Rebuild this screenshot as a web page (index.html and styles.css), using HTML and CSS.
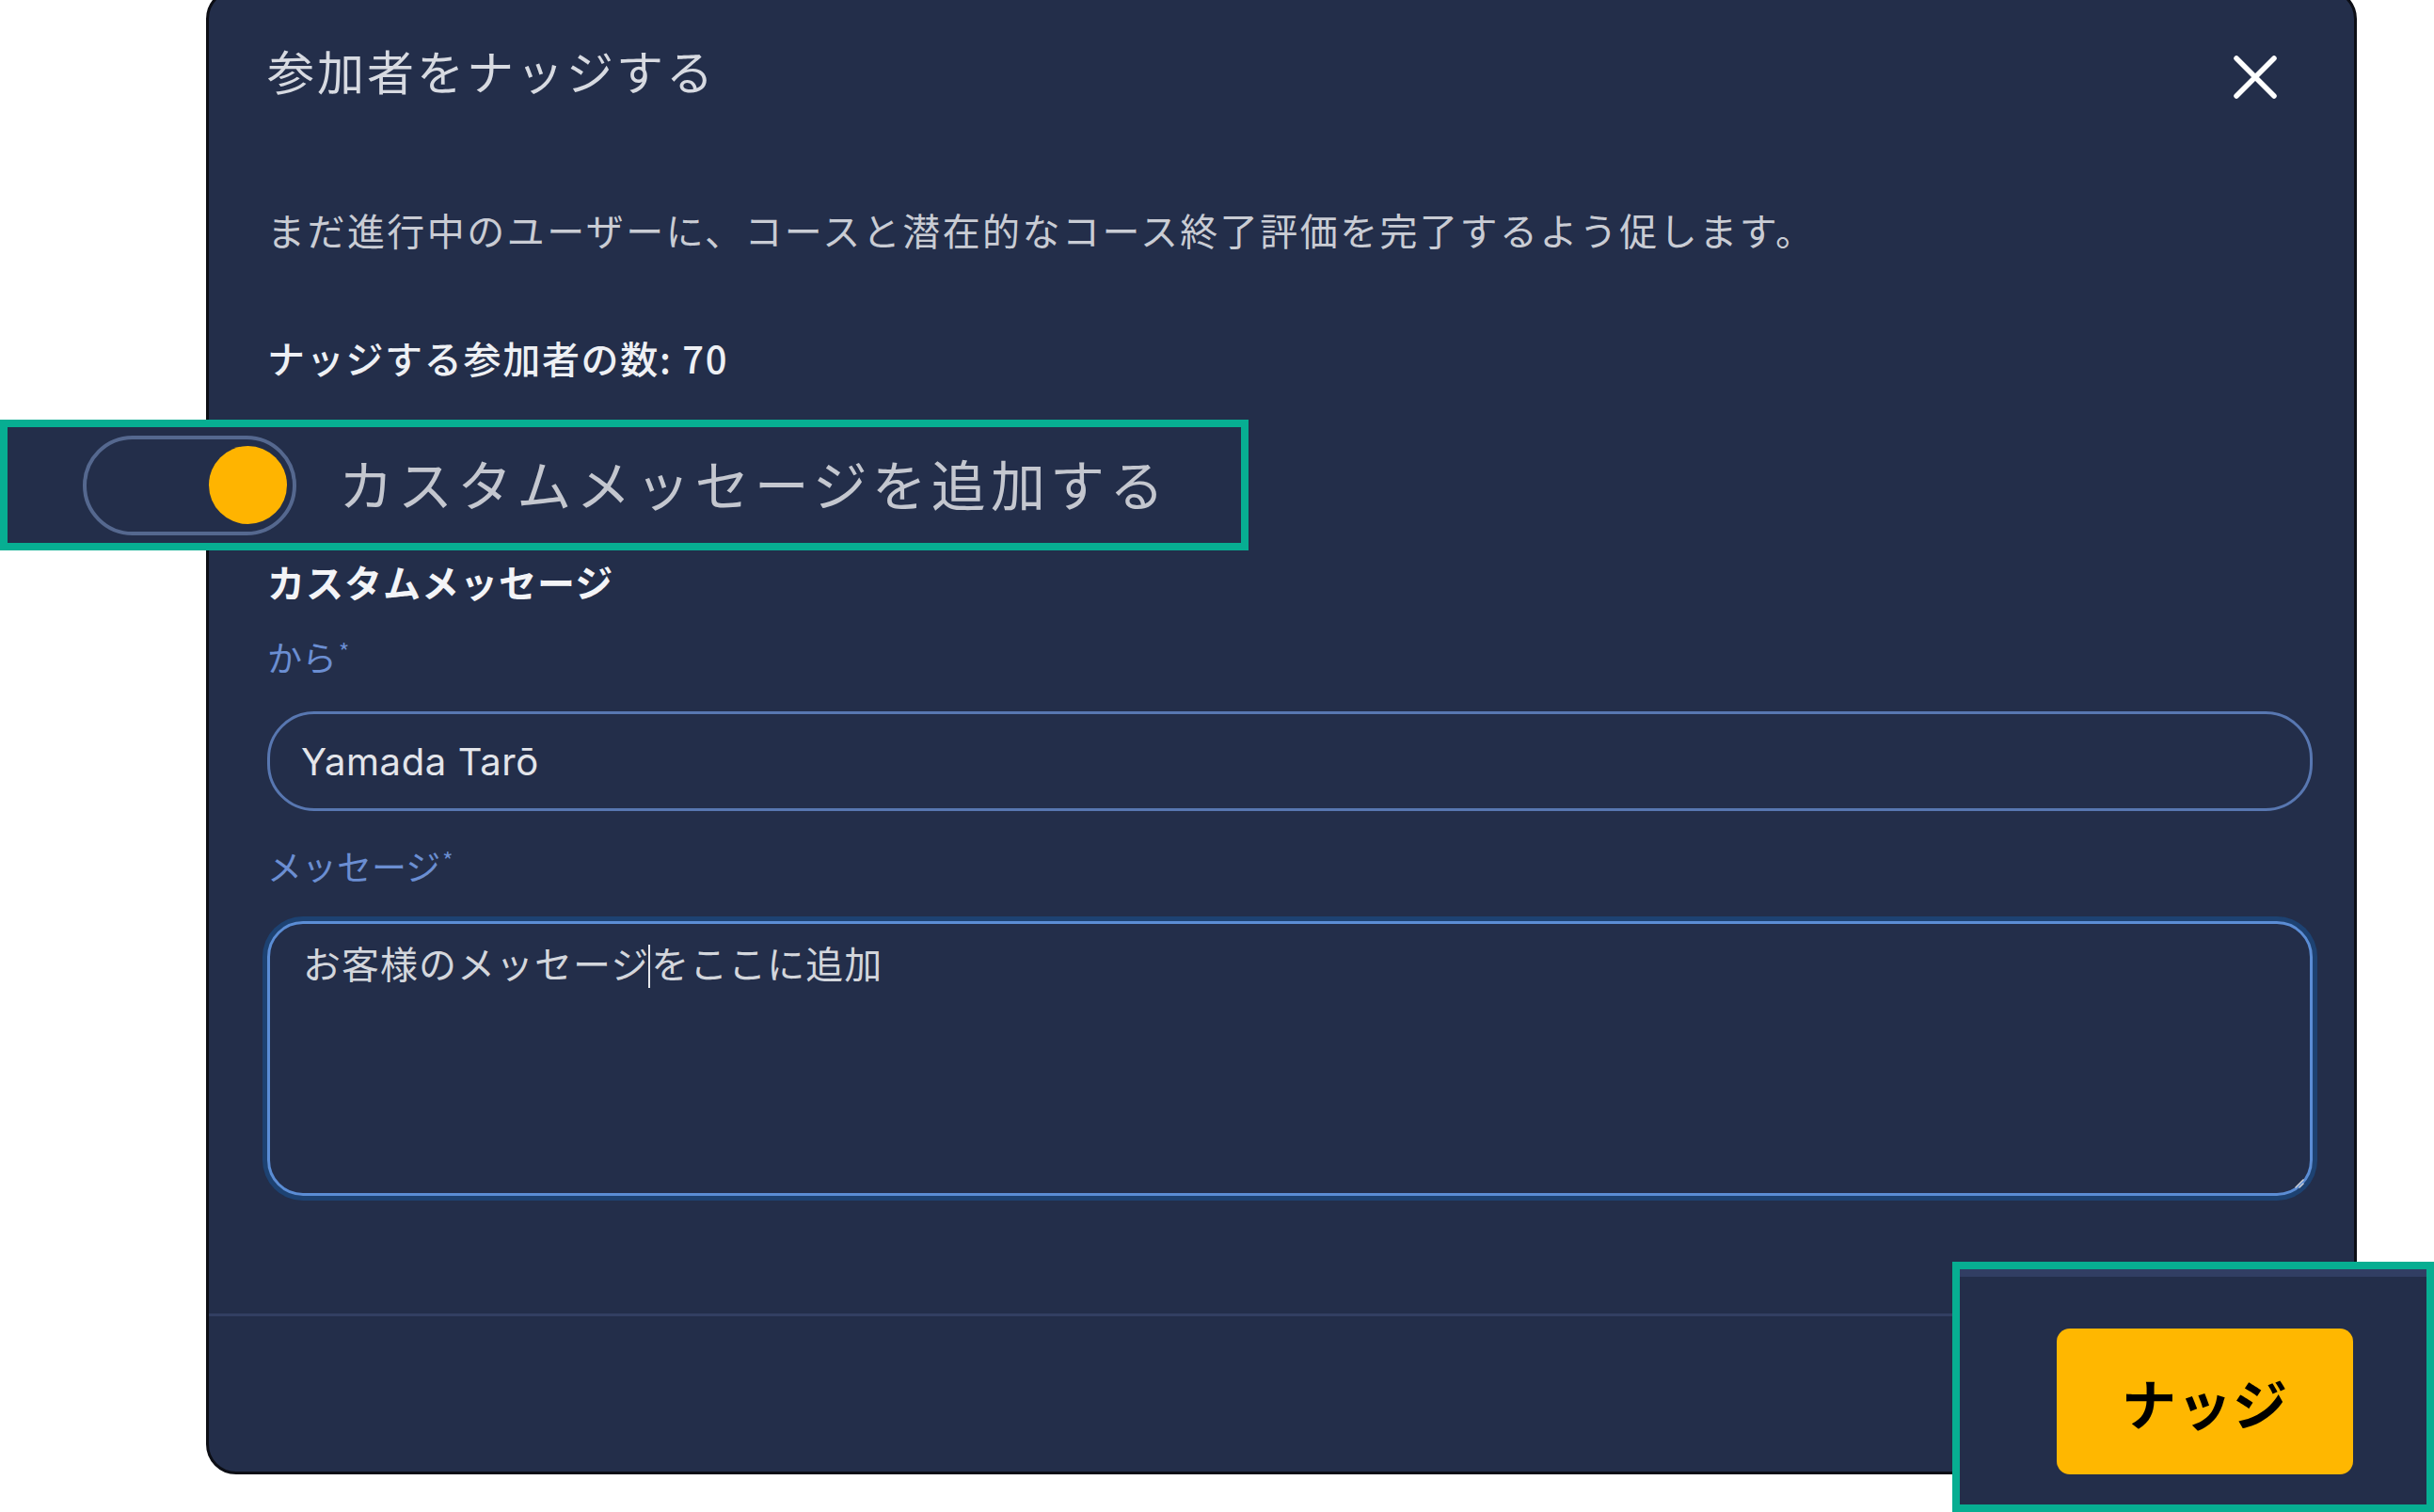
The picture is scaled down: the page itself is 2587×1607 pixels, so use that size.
FILE: index.html
```html
<!DOCTYPE html>
<html lang="ja">
<head>
<meta charset="utf-8">
<title>参加者をナッジする</title>
<link rel="stylesheet" href="styles.css">
</head>
<body>
<div class="modal">
  <div class="modal-header">
    <h1 class="title">参加者をナッジする</h1>
    <button class="close" aria-label="閉じる">
      <svg width="46" height="46" viewBox="0 0 46 46"><path d="M3 3 L43 43 M43 3 L3 43" stroke="#ffffff" stroke-width="5.5" stroke-linecap="round" fill="none"/></svg>
    </button>
  </div>
  <div class="modal-body">
    <p class="desc">まだ進行中のユーザーに、コースと潜在的なコース終了評価を完了するよう促します。</p>
    <p class="count">ナッジする参加者の数: 70</p>
    <div class="toggle-slot"></div>
    <h2 class="section">カスタムメッセージ</h2>
    <div class="field-label">から<span class="req">*</span></div>
    <div class="input">Yamada Tarō</div>
    <div class="field-label label-msg">メッセージ<span class="req">*</span></div>
    <div class="textarea">お客様のメッセージ<span class="caret"></span>をここに追加<svg class="grip" width="12" height="12" viewBox="0 0 12 12"><path d="M11 3 L3 11 M11 7 L7 11" stroke="#c9ccd3" stroke-width="1.6" stroke-linecap="round"/></svg></div>
  </div>
  <div class="divider"></div>
  <div class="modal-footer"></div>
</div>

<div class="callout callout-toggle">
  <div class="toggle"><span class="knob"></span></div>
  <span class="toggle-label">カスタムメッセージを追加する</span>
</div>

<div class="callout callout-button">
  <div class="callout-line"></div>
  <div class="button-row">
    <button class="nudge">ナッジ</button>
  </div>
</div>
</body>
</html>
```

FILE: styles.css
```css
html, body {
  margin: 0;
  padding: 0;
}

body {
  position: relative;
  width: 2587px;
  height: 1607px;
  overflow: hidden;
  background: #ffffff;
  font-family: "Noto Sans CJK JP", "Noto Sans", sans-serif;
}

.modal {
  box-sizing: border-box;
  width: 2286px;
  margin: -12px 0 0 219px;
  background: #232e4a;
  border: 3px solid #0c0e15;
  border-radius: 32px;
}

.modal-header {
  display: flex;
  justify-content: space-between;
  align-items: flex-start;
  padding: 51px 82px 0 62px;
}

.title {
  margin: 0;
  font-size: 50px;
  line-height: 64px;
  font-weight: 400;
  letter-spacing: 3px;
  color: #d7dae1;
}

.close {
  margin-top: 17px;
  padding: 0;
  border: 0;
  background: none;
  width: 46px;
  height: 46px;
  display: flex;
}

.modal-body {
  display: flex;
  flex-direction: column;
  padding: 0 44px 0 62px;
}

.desc {
  margin: 110px 0 0;
  font-size: 40px;
  line-height: 56px;
  letter-spacing: 2.45px;
  color: #c9ccd4;
}

.count {
  margin: 80px 0 0;
  font-size: 40px;
  line-height: 56px;
  font-weight: 500;
  letter-spacing: 1.7px;
  color: #eef0f4;
}

.toggle-slot {
  height: 182px;
}

.section {
  margin: 0;
  font-size: 40px;
  line-height: 56px;
  font-weight: 700;
  letter-spacing: 1px;
  color: #f3f4f7;
}

.field-label {
  margin-top: 21px;
  font-size: 37px;
  line-height: 50px;
  color: #6b8ed2;
}

.label-msg {
  margin-top: 27px;
}

.req {
  font-size: 24px;
  vertical-align: 12px;
  margin-left: 2px;
}

.input {
  box-sizing: border-box;
  margin-top: 33px;
  height: 106px;
  display: flex;
  align-items: center;
  padding-left: 33px;
  border: 3px solid #5877b1;
  border-radius: 50px;
  font-family: Inter, "Noto Sans", sans-serif;
  font-size: 40px;
  letter-spacing: 0.6px;
  color: #e3e5ea;
}

.textarea {
  position: relative;
  box-sizing: border-box;
  margin-top: 34px;
  height: 292px;
  padding: 13px 0 0 35px;
  border: 3px solid #5b8dd5;
  border-radius: 38px;
  box-shadow: 0 0 0 5px #1d4272;
  font-size: 40px;
  line-height: 56px;
  letter-spacing: 1px;
  color: #d3d6dc;
}

.caret {
  display: inline-block;
  width: 2px;
  height: 46px;
  margin: 0 1px 0 -1px;
  background: #e4e6ea;
  vertical-align: -10px;
}

.grip {
  position: absolute;
  right: 6px;
  bottom: 5px;
}

.divider {
  margin-top: 125px;
  height: 3px;
  background: #323f62;
}

.modal-footer {
  height: 165px;
}

/* magnified callouts */
.callout {
  position: absolute;
  box-sizing: border-box;
  border: 8px solid #07ae92;
  background: #232e4a;
}

.callout-toggle {
  left: 0;
  top: 446px;
  width: 1327px;
  height: 139px;
  display: flex;
  align-items: center;
  gap: 45px;
  padding-left: 80px;
}

.toggle {
  box-sizing: border-box;
  width: 227px;
  height: 106px;
  border: 4px solid #55688f;
  border-radius: 53px;
  display: flex;
  align-items: center;
  justify-content: flex-end;
  padding-right: 6px;
  filter: blur(0.6px);
}

.knob {
  width: 83px;
  height: 83px;
  border-radius: 50%;
  background: #ffb400;
}

.toggle-label {
  font-size: 58px;
  line-height: 70px;
  letter-spacing: 5.1px;
  color: #c4c7cf;
  filter: blur(0.7px);
  margin-top: -6px;
}

.callout-button {
  left: 2075px;
  top: 1341px;
  width: 512px;
  height: 266px;
  display: flex;
  flex-direction: column;
}

.callout-line {
  height: 8px;
  background: #313e63;
  filter: blur(0.6px);
}

.button-row {
  display: flex;
  justify-content: flex-end;
  padding: 55px 78px 0 0;
}

.nudge {
  width: 315px;
  height: 155px;
  border: 0;
  border-radius: 14px;
  background: #ffb700;
  font-family: "Noto Sans CJK JP", sans-serif;
  font-size: 58px;
  font-weight: 700;
  letter-spacing: 1px;
  color: #000000;
  filter: blur(0.5px);
}
```
